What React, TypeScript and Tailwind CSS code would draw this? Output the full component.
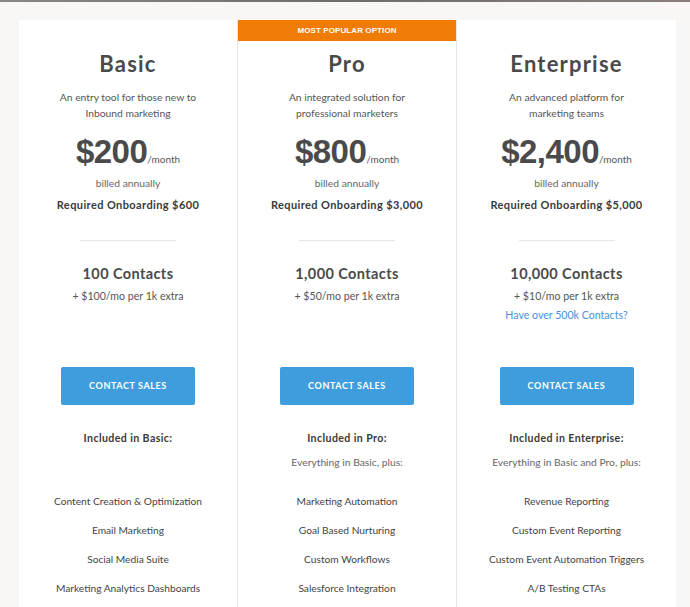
import React from "react";

interface Plan {
  name: string;
  desc: string[];
  price: string;
  onboarding: string;
  contacts: string;
  extra: string;
  link?: string;
  popular?: boolean;
  included: string;
  plus?: string;
  features: string[];
}

const plans: Plan[] = [
  {
    name: "Basic",
    desc: ["An entry tool for those new to", "Inbound marketing"],
    price: "$200",
    onboarding: "Required Onboarding $600",
    contacts: "100 Contacts",
    extra: "+ $100/mo per 1k extra",
    included: "Included in Basic:",
    features: [
      "Content Creation & Optimization",
      "Email Marketing",
      "Social Media Suite",
      "Marketing Analytics Dashboards",
    ],
  },
  {
    name: "Pro",
    desc: ["An integrated solution for", "professional marketers"],
    price: "$800",
    onboarding: "Required Onboarding $3,000",
    contacts: "1,000 Contacts",
    extra: "+ $50/mo per 1k extra",
    popular: true,
    included: "Included in Pro:",
    plus: "Everything in Basic, plus:",
    features: [
      "Marketing Automation",
      "Goal Based Nurturing",
      "Custom Workflows",
      "Salesforce Integration",
    ],
  },
  {
    name: "Enterprise",
    desc: ["An advanced platform for", "marketing teams"],
    price: "$2,400",
    onboarding: "Required Onboarding $5,000",
    contacts: "10,000 Contacts",
    extra: "+ $10/mo per 1k extra",
    link: "Have over 500k Contacts?",
    included: "Included in Enterprise:",
    plus: "Everything in Basic and Pro, plus:",
    features: [
      "Revenue Reporting",
      "Custom Event Reporting",
      "Custom Event Automation Triggers",
      "A/B Testing CTAs",
    ],
  },
];

const PlanColumn = ({ plan, last }: { plan: Plan; last: boolean }) => {
  return (
    <div
      className={
        "flex flex-col items-center text-center min-h-[600px] " +
        (last ? "" : "border-r border-[#e6e6e6]")
      }
    >
      <div className="h-[21px] w-full">
        {plan.popular && (
          <div className="h-full w-full bg-[#f07b05] text-white text-[8px] font-bold leading-[21px] tracking-[0.1px] font-['Liberation_Sans',sans-serif]">
            MOST POPULAR OPTION
          </div>
        )}
      </div>
      <h2 className="mt-[8px] text-[22px] leading-[30px] font-bold tracking-[1.2px] text-[#4a4a4a]">
        {plan.name}
      </h2>
      <div className="mt-[10px] text-[10.3px] leading-4 text-[#555]">
        {plan.desc.map((d) => (
          <div key={d}>{d}</div>
        ))}
      </div>
      <div className="mt-[13px] flex items-baseline h-[36px] leading-[36px] text-[#4a4a4a]">
        <span className="text-[33px] font-bold tracking-[-0.5px] font-['Liberation_Sans',sans-serif]">
          {plan.price}
        </span>
        <span className="text-[10px] text-[#555]">/month</span>
      </div>
      <div className="mt-[5px] text-[10.3px] leading-4 text-[#666]">billed annually</div>
      <div className="mt-[6px] text-[11px] leading-4 font-bold tracking-[0.4px] text-[#3a3a3a]">
        {plan.onboarding}
      </div>
      <div className="mt-[27px] h-px w-[96px] bg-[#e6e6e6]" />
      <div className="mt-[23px] h-[103px] flex flex-col items-center">
        <div className="text-[14.5px] leading-5 font-bold tracking-[0.4px] text-[#4a4a4a]">
          {plan.contacts}
        </div>
        <div className="mt-[4px] text-[10.6px] leading-4 text-[#555]">{plan.extra}</div>
        {plan.link && (
          <div className="mt-[3px] text-[10.6px] leading-4 text-[#4a90d9]">{plan.link}</div>
        )}
      </div>
      <button className="h-[38px] w-[134px] rounded-[2px] bg-[#3f9ddd] text-white text-[9px] font-bold tracking-[0.6px]">
        CONTACT SALES
      </button>
      <div className="mt-[25px] h-[63px] flex flex-col items-center">
        <div className="text-[10.6px] leading-4 font-bold tracking-[0.4px] text-[#3a3a3a]">
          {plan.included}
        </div>
        {plan.plus && (
          <div className="mt-[8px] text-[10.3px] leading-4 text-[#666]">{plan.plus}</div>
        )}
      </div>
      <ul className="flex flex-col items-center gap-[13px] text-[10.2px] leading-4 text-[#444]">
        {plan.features.map((f) => (
          <li key={f}>{f}</li>
        ))}
      </ul>
    </div>
  );
};

const App = () => {
  return (
    <div className="h-[607px] w-[690px] overflow-hidden bg-[#f8f7f5] font-['Lato',sans-serif]">
      <div className="h-[2px] bg-gradient-to-r from-[#8a8682] via-[#6f6c6a] to-[#8a7f7a]" />
      <div className="pt-[18px] pl-[19px]">
        <div className="grid grid-cols-3 w-[657px] bg-white">
          {plans.map((p, i) => (
            <PlanColumn key={p.name} plan={p} last={i === plans.length - 1} />
          ))}
        </div>
      </div>
    </div>
  );
};

export default App;
